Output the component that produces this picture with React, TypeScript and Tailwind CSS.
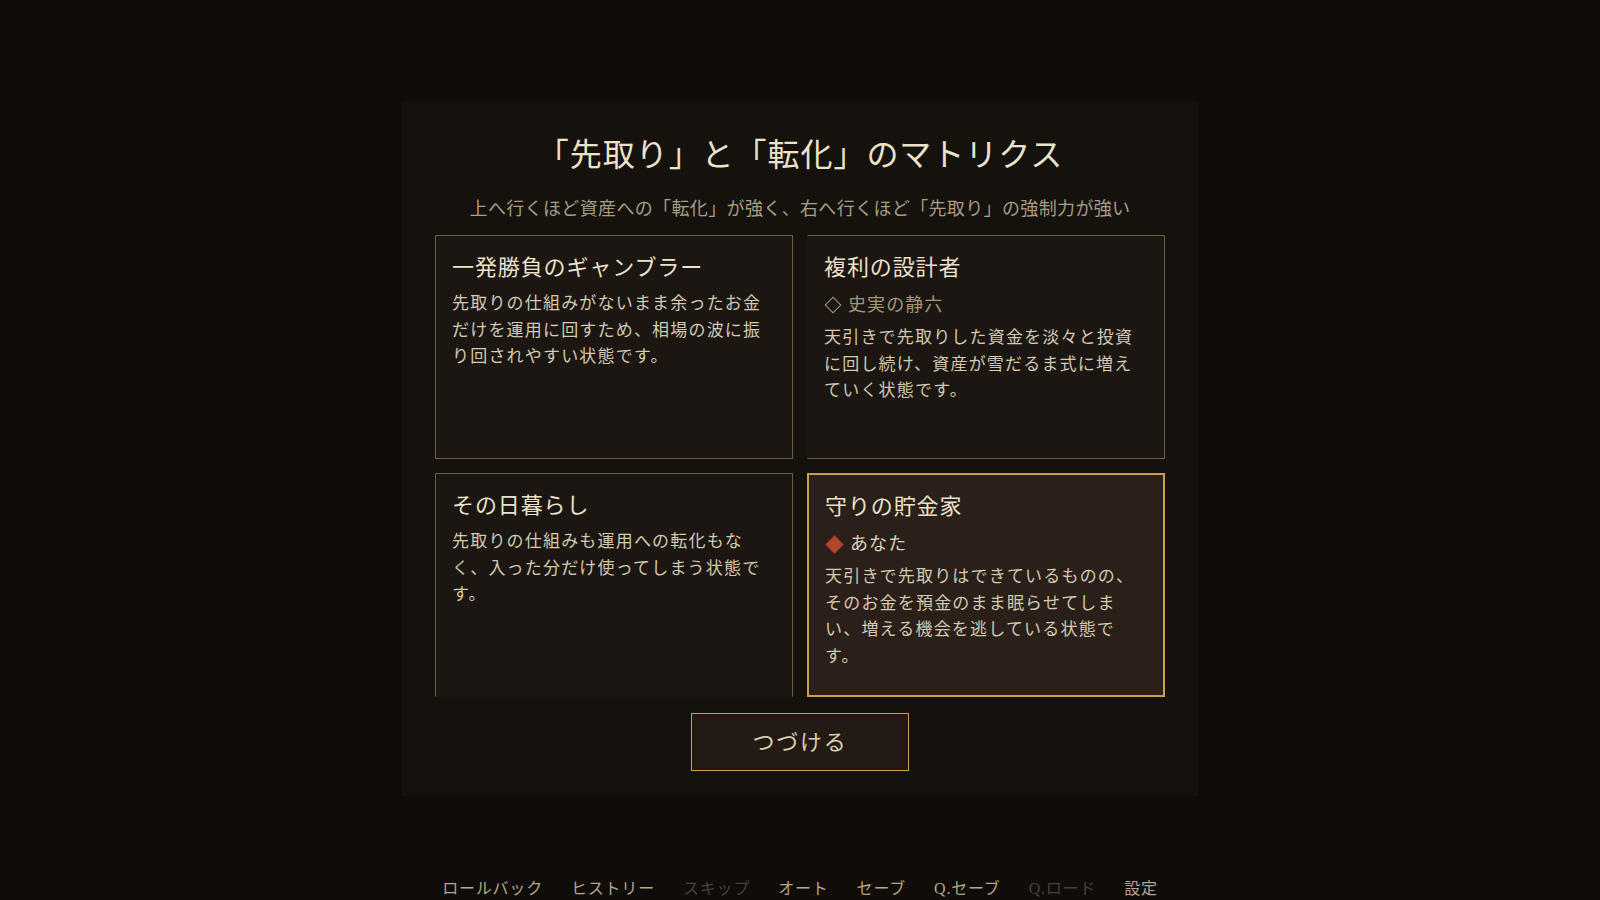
import React from 'react';

type Card = {
  title: string;
  tag?: { label: string; you?: boolean };
  body: string;
  active?: boolean;
  extra?: string;
};

const cards: Card[] = [
  {
    title: '一発勝負のギャンブラー',
    body: '先取りの仕組みがないまま余ったお金だけを運用に回すため、相場の波に振り回されやすい状態です。',
    extra: '',
  },
  {
    title: '複利の設計者',
    tag: { label: '史実の静六' },
    body: '天引きで先取りした資金を淡々と投資に回し続け、資産が雪だるま式に増えていく状態です。',
    extra: 'border-l-transparent',
  },
  {
    title: 'その日暮らし',
    body: '先取りの仕組みも運用への転化もなく、入った分だけ使ってしまう状態です。',
    extra: 'border-b-transparent',
  },
  {
    title: '守りの貯金家',
    tag: { label: 'あなた', you: true },
    body: '天引きで先取りはできているものの、そのお金を預金のまま眠らせてしまい、増える機会を逃している状態です。',
    active: true,
  },
];

const nav = [
  { label: 'ロールバック' },
  { label: 'ヒストリー' },
  { label: 'スキップ', off: true },
  { label: 'オート' },
  { label: 'セーブ' },
  { label: 'Q.セーブ' },
  { label: 'Q.ロード', off: true },
  { label: '設定' },
];

function MatrixCard({ card }: { card: Card }) {
  return (
    <div
      className={`h-[224px] p-4 ${
        card.active
          ? 'border-2 border-[#c9a043] bg-[#2a2019]'
          : `border border-[#6e5c3f] bg-[#1b1611] ${card.extra}`
      }`}
    >
      <h3 className="mb-2 text-[22px] leading-[31px] tracking-[0.04em] text-[#ebe1cc]">
        {card.title}
      </h3>
      {card.tag && (
        <div className="mb-1.5 flex items-center gap-[9px] text-[18px] leading-[28px] tracking-[0.06em]">
          {card.tag.you ? (
            <span className="ml-[3px] h-[13px] w-[13px] rotate-45 bg-[#b3432d]" />
          ) : (
            <span className="ml-[3px] h-[12px] w-[12px] rotate-45 border-[1.5px] border-[#a39679]" />
          )}
          <span className={card.tag.you ? 'text-[#ddd2bb]' : 'text-[#a39679]'}>{card.tag.label}</span>
        </div>
      )}
      <p className="text-[17px] leading-[26.7px] tracking-[0.07em] text-[#d3c8b0]">{card.body}</p>
    </div>
  );
}

export default function App() {
  return (
    <div
      className="flex h-[900px] w-full flex-col items-center overflow-hidden bg-[#100c09]"
      style={{ fontFamily: '"Liberation Serif", "Noto Sans CJK JP", serif' }}
    >
      <div className="mt-[102px] w-[796px] bg-[#15110d] px-[33px] pb-[25px] pt-[31px]">
        <h1 className="text-center text-[32px] leading-[45px] tracking-[0.03em] text-[#ece2cc]">
          「先取り」と「転化」のマトリクス
        </h1>
        <p className="mt-[18px] text-center text-[18px] leading-[27px] tracking-[0.02em] text-[#a89c84]">
          上へ行くほど資産への「転化」が強く、右へ行くほど「先取り」の強制力が強い
        </p>
        <div className="mt-[12px] grid grid-cols-2 gap-[14px]">
          {cards.map((c) => (
            <MatrixCard key={c.title} card={c} />
          ))}
        </div>
        <div className="mt-4 flex justify-center">
          <button className="h-[58px] w-[218px] border border-[#c9a043] bg-[#221a13] text-[22px] tracking-[0.08em] text-[#d8ccb3]">
            つづける
          </button>
        </div>
      </div>
      <div className="mt-[81px] flex gap-[28px] text-[16px] leading-[24px] tracking-[0.05em]">
        {nav.map((n) => (
          <span key={n.label} className={n.off ? 'text-[#4b4236]' : 'text-[#b3a68c]'}>
            {n.label}
          </span>
        ))}
      </div>
    </div>
  );
}
